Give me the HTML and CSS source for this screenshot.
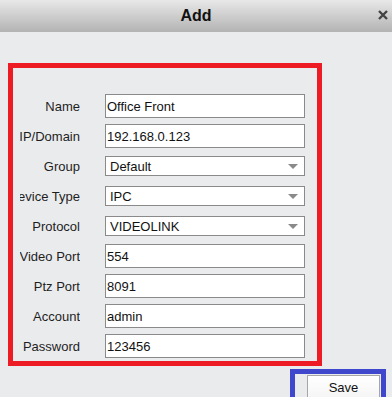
FILE: index.html
```html
<!DOCTYPE html>
<html>
<head>
<meta charset="utf-8">
<link rel="stylesheet" href="styles.css">
</head>
<body>
<div class="titlebar">
  <span class="title">Add</span>
  <svg class="close" width="10" height="10" viewBox="0 0 10 10"><path d="M1 1 L9 9 M9 1 L1 9" stroke="#444" stroke-width="2.4" fill="none"/></svg>
</div>
<div class="content">
  <div class="redbox">
    <div class="row"><div class="label"><span>Name</span></div><div class="field input">Office Front</div></div>
    <div class="row"><div class="label"><span>IP/Domain</span></div><div class="field input">192.168.0.123</div></div>
    <div class="row"><div class="label"><span>Group</span></div><div class="field select">Default<i class="arrow"></i></div></div>
    <div class="row"><div class="label"><span>Device Type</span></div><div class="field select">IPC<i class="arrow"></i></div></div>
    <div class="row"><div class="label"><span>Protocol</span></div><div class="field select">VIDEOLINK<i class="arrow"></i></div></div>
    <div class="row"><div class="label"><span>Video Port</span></div><div class="field input">554</div></div>
    <div class="row"><div class="label"><span>Ptz Port</span></div><div class="field input">8091</div></div>
    <div class="row"><div class="label"><span>Account</span></div><div class="field input">admin</div></div>
    <div class="row"><div class="label"><span>Password</span></div><div class="field input">123456</div></div>
  </div>
  <div class="bluebox">
    <div class="savebtn">Save</div>
  </div>
</div>
</body>
</html>
```
FILE: styles.css
```css
html, body {
  margin: 0;
  padding: 0;
  height: 397px;
  overflow: hidden;
}
body {
  background: #eaebed;
  font-family: "Liberation Sans", Arial, sans-serif;
  font-size: 13px;
  color: #1e1e1e;
}
.titlebar {
  height: 32px;
  background: linear-gradient(#e8e8e8, #b3b3b3);
  display: flex;
  align-items: center;
  justify-content: center;
  position: relative;
}
.title {
  font-weight: bold;
  font-size: 16px;
  color: #111;
  margin-top: -1px;
}
.close {
  position: absolute;
  right: 4px;
  top: 10px;
}
.content {
  padding: 31px 0 0 8px;
}
.redbox {
  width: 304px;
  height: 270px;
  border: 5px solid #ed1c24;
  padding-top: 23px;
  box-sizing: content-box;
}
.row {
  height: 30px;
  display: flex;
  align-items: center;
}
.label {
  width: 60px;
  margin-left: 7px;
  margin-right: 25px;
  display: flex;
  justify-content: flex-end;
  overflow: hidden;
  white-space: nowrap;
}
.field {
  width: 200px;
  box-sizing: border-box;
  border: 1px solid #8a8a8a;
  background: #fff;
  color: #111;
  display: flex;
  align-items: center;
  white-space: nowrap;
}
.input {
  height: 24px;
  padding-left: 1px;
}
.select {
  height: 20px;
  padding-left: 4px;
  position: relative;
}
.arrow {
  position: absolute;
  right: 6px;
  top: 7px;
  width: 0;
  height: 0;
  border-left: 5px solid transparent;
  border-right: 5px solid transparent;
  border-top: 5px solid #8a8a8a;
}
.bluebox {
  margin: 3px 0 0 282px;
  width: 86px;
  height: 30px;
  border: 5px solid #3f48cc;
  padding-top: 1px;
}
.savebtn {
  margin-left: 12px;
  width: 73px;
  height: 26px;
  box-sizing: border-box;
  border: 1px solid #a6a6a6;
  background: linear-gradient(#ffffff, #f4f4f4);
  text-align: center;
  padding-top: 4px;
  color: #111;
}
```
